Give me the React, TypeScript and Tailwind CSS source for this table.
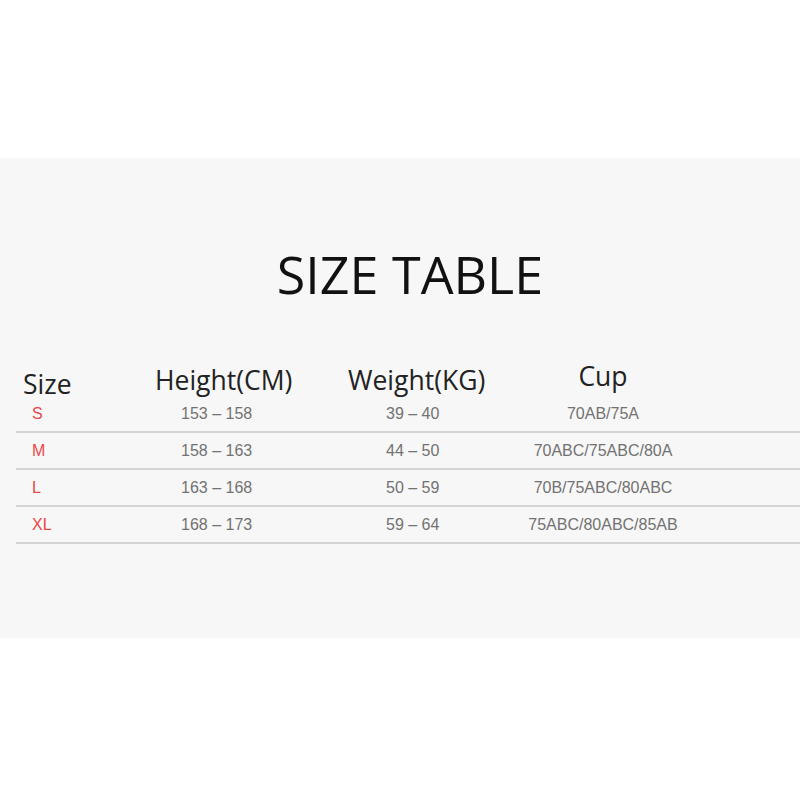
const rows = [
  { size: "S", height: "153 – 158", weight: "39 – 40", cup: "70AB/75A" },
  { size: "M", height: "158 – 163", weight: "44 – 50", cup: "70ABC/75ABC/80A" },
  { size: "L", height: "163 – 168", weight: "50 – 59", cup: "70B/75ABC/80ABC" },
  { size: "XL", height: "168 – 173", weight: "59 – 64", cup: "75ABC/80ABC/85AB" },
]

export default function App() {
  return (
    <div className="w-[800px] h-[800px] bg-white overflow-hidden">
      <div className="h-[158px]" />
      <div className="h-[480px] bg-[#f7f7f7] flex flex-col">
        <div className="mt-[86px] pl-[20px] text-center text-[52px] leading-[60px] text-[#111] font-['Open_Sans',sans-serif]">
          SIZE TABLE
        </div>
        <div className="mt-[60px] ml-[16px] font-['Open_Sans',sans-serif] text-[#222]">
          <div className="flex items-end h-[32px] text-[26.5px] leading-[32px]">
            <div className="w-[120px] pl-[7px] translate-y-[4px]">Size</div>
            <div className="w-[200px] pl-[19px]">Height(CM)</div>
            <div className="w-[172px] pl-[12px]">Weight(KG)</div>
            <div className="w-[190px] text-center -translate-y-[4px]">Cup</div>
          </div>
          {rows.map((r) => (
            <div
              key={r.size}
              className="flex items-center h-[37px] border-b-2 border-[#d4d4d4] font-['Liberation_Sans',Arial,sans-serif] text-[16px] text-[#727272]"
            >
              <div className="w-[120px] pl-[16px] text-[#e9474a]">{r.size}</div>
              <div className="w-[200px] pl-[45px]">{r.height}</div>
              <div className="w-[172px] pl-[50px]">{r.weight}</div>
              <div className="w-[190px] text-center">{r.cup}</div>
            </div>
          ))}
        </div>
      </div>
    </div>
  )
}
